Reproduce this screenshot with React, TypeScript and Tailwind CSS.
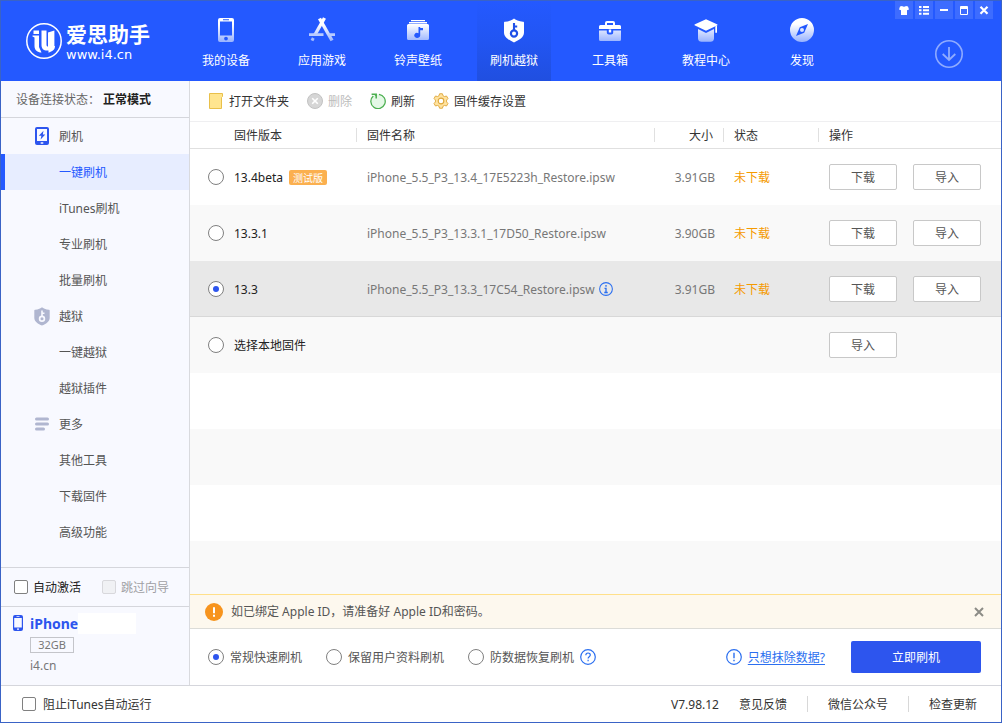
import React, { useState } from "react";

function Fade({ id }: { id: string }) {
  return (
    <defs>
      <linearGradient id={id} x1="0" y1="0" x2="0" y2="24" gradientUnits="userSpaceOnUse">
        <stop offset="0.3" stopColor="#ffffff" />
        <stop offset="1" stopColor="#9db6ff" />
      </linearGradient>
    </defs>
  );
}

function NavPhone() {
  return (
    <svg width="26" height="26" viewBox="0 0 26 26" aria-hidden="true">
      <Fade id="f1" />
      <path
        fill="url(#f1)"
        fillRule="evenodd"
        d="M7 1h12a2 2 0 0 1 2 2v20a2 2 0 0 1-2 2H7a2 2 0 0 1-2-2V3a2 2 0 0 1 2-2Zm0 3.500v14h12v-14ZM10 2.300v1h6v-1ZM13 19.700a1.900 1.900 0 1 0 0 3.800 1.900 1.900 0 0 0 0-3.800Z"
      />
    </svg>
  );
}

function NavApps() {
  return (
    <svg width="26" height="26" viewBox="0 0 26 26" fill="none" aria-hidden="true">
      <Fade id="f2" />
      <g stroke="url(#f2)" strokeWidth="3.400" strokeLinejoin="round">
        <path d="M15.500 1 5.800 18" />
        <path d="M10.500 1.500 23 23.500" />
        <path d="M0 17.600h14.500M19.500 17.600H26" stroke="#b9cbff" strokeWidth="2.600" />
        <path d="M4.300 21 3 23.600" stroke="#a5bcff" strokeWidth="3" />
      </g>
    </svg>
  );
}

function NavMusic() {
  return (
    <svg width="26" height="26" viewBox="0 0 26 26" aria-hidden="true">
      <Fade id="f3" />
      <path fill="#fff" d="M6 3h14v1.200H6ZM4 5h18v1.400H4Z" />
      <path
        fill="url(#f3)"
        fillRule="evenodd"
        d="M3.500 7h19A1.500 1.500 0 0 1 24 8.500v13a1.500 1.500 0 0 1-1.500 1.500h-19A1.500 1.500 0 0 1 2 21.500v-13A1.500 1.500 0 0 1 3.500 7Zm10 3v6.200a3 2.500 0 1 0 1.700 2.200v-5.200h2.800v-2.200h-2.800V10Z"
      />
    </svg>
  );
}

function ShieldKey({ size, fill, hole }: { size: number; fill: string; hole: string }) {
  return (
    <svg width={size} height={size} viewBox="0 0 26 26" aria-hidden="true">
      <path
        fill={fill}
        d="M13 1.500c1.300 1.500 5 3 9 3.300.700 0 1 .300 1 1V15.500c0 5-5 7.500-10 10C8 23 3 20.500 3 15.500V5.800c0-.700.300-1 1-1C8 4.500 11.700 3 13 1.500Z"
      />
      <circle cx="13" cy="16.500" r="3.100" fill="none" stroke={hole} strokeWidth="2.200" />
      <path d="M13 14V6M13 9.500h3.200" stroke={hole} strokeWidth="2.100" fill="none" />
    </svg>
  );
}

function NavToolbox() {
  return (
    <svg width="26" height="26" viewBox="0 0 26 26" aria-hidden="true">
      <Fade id="f5" />
      <path
        fill="#fff"
        fillRule="evenodd"
        d="M2 12V9.500A1.500 1.500 0 0 1 3.500 8H8V6a2 2 0 0 1 2-2h6a2 2 0 0 1 2 2v2h4.500A1.500 1.500 0 0 1 24 9.500V12ZM10 8h6V6h-6Z"
      />
      <path
        fill="url(#f5)"
        d="M2 13.500h7.800v2a2 2 0 0 0 2 2h2.400a2 2 0 0 0 2-2v-2H24v9a1.500 1.500 0 0 1-1.500 1.500h-19A1.500 1.500 0 0 1 2 22.500Z"
      />
      <path fill="#fff" d="M11.800 12.500h2.400v3h-2.400Z" />
    </svg>
  );
}

function NavSchool() {
  return (
    <svg width="26" height="26" viewBox="0 0 26 26" aria-hidden="true">
      <Fade id="f6" />
      <path
        fill="#fff"
        d="M13 2.200 24 7.300c.700.400.700.900 0 1.200L13 13.800 2 8.500c-.700-.300-.700-.800 0-1.200ZM22.300 9.500l1.700-.800v7h-1.700Z"
      />
      <path fill="url(#f6)" d="m5 12 8 4 8-4v9.500c0 2-1.500 3.300-3.500 3.300h-9C6.500 24.800 5 23.500 5 21.500Z" />
    </svg>
  );
}

function NavCompass() {
  return (
    <svg width="26" height="26" viewBox="0 0 26 26" aria-hidden="true">
      <Fade id="f7" />
      <path
        fill="url(#f7)"
        fillRule="evenodd"
        d="M13 1a12 12 0 1 1 0 24 12 12 0 0 1 0-24Zm6 5.900-8.200 3.400-3.800 8.800 8.200-3.400ZM13 11a2 2 0 1 1 0 4 2 2 0 0 1 0-4Z"
      />
    </svg>
  );
}

function LogoMark() {
  return (
    <svg width="36" height="36" viewBox="0 0 36 36" fill="none" aria-hidden="true">
      <circle cx="18" cy="18" r="17.200" stroke="#fff" strokeWidth="1.500" />
      <path fill="#fff" d="M7.500 7.500h5.500v3.500H7.500ZM6.500 12.500H13v11.500l2.500 5.500c-4 0-7-2.200-7-6.500v-8.500l-2-1Z" />
      <path
        fill="#fff"
        d="M15.500 7.500h5v14c0 1.500.500 2 1.500 2V9.500l6.400-2v15.500H29c0 2-.800 4-2.800 5l-3.700 1.800v-2.300c-4.500.600-7-1.500-7-5.500Z"
      />
    </svg>
  );
}

function InfoCircle({ kind, size }: { kind: "i" | "!" | "?"; size: number }) {
  return (
    <svg width={size} height={size} viewBox="0 0 16 16" fill="none" stroke="#2b6ff0" aria-hidden="true">
      <circle cx="8" cy="8" r="7.300" strokeWidth="1.200" />
      {kind === "i" && <path d="M8 3.500v1.800M6.300 7.200H8v4.600M6 12h4" strokeWidth="1.500" />}
      {kind === "!" && <path d="M8 3.700v5.600M8 10.700v1.600" strokeWidth="1.400" />}
      {kind === "?" && (
        <path d="M5.800 6.300c0-3 4.500-3 4.500-.3 0 1.700-2.200 1.700-2.200 3.500M8.100 10.800v1.500" strokeWidth="1.200" />
      )}
    </svg>
  );
}

const navItems = [
  { label: "我的设备", icon: <NavPhone /> },
  { label: "应用游戏", icon: <NavApps /> },
  { label: "铃声壁纸", icon: <NavMusic /> },
  { label: "刷机越狱", icon: <ShieldKey size={26} fill="#fff" hole="#2050e8" />, active: true },
  { label: "工具箱", icon: <NavToolbox /> },
  { label: "教程中心", icon: <NavSchool /> },
  { label: "发现", icon: <NavCompass /> },
];

const windowButtons = [
  {
    label: "换肤",
    icon: <path fill="#fff" d="M5 5.500 7 5c1 1 3 1 4 0l2 .500 1 3-2 .700V14H6V9.200L4 8.500Z" />,
  },
  {
    label: "菜单",
    icon: <path fill="#fff" d="M4 5h2.500v2H4ZM8 5h6v2H8ZM4 8.300h2.500v2H4ZM8 8.300h6v2H8ZM4 11.700h2.500v2H4ZM8 11.700h6v2H8Z" />,
  },
  { label: "最小化", icon: <path fill="#fff" d="M5 8h8v2H5Z" /> },
  {
    label: "最大化",
    icon: <path fill="#fff" fillRule="evenodd" d="M6 5h6a1 1 0 0 1 1 1v7a1 1 0 0 1-1 1H6a1 1 0 0 1-1-1V6a1 1 0 0 1 1-1Zm0 3v5h6V8Z" />,
  },
  { label: "关闭", icon: <path stroke="#fff" strokeWidth="2.200" d="m5.500 5.700 7 7m0-7-7 7" /> },
];

function Header() {
  return (
    <header className="flex h-20 bg-[#2459ff] text-white">
      <a href="#home" className="flex w-[188px] items-center gap-1 pl-[25px]">
        <LogoMark />
        <span className="flex flex-col pt-[3px]">
          <span className="whitespace-nowrap text-[21px] font-bold leading-6">爱思助手</span>
          <span className="font-['DejaVu_Sans',sans-serif] text-[13px] leading-[17px]">www.i4.cn</span>
        </span>
      </a>
      <nav className="flex gap-[22px]">
        {navItems.map((item) => (
          <a
            key={item.label}
            href="#nav"
            aria-current={item.active ? "page" : undefined}
            className={
              "flex w-[74px] flex-col items-center gap-2 pt-4 " +
              (item.active ? "bg-linear-to-b from-[#2459ff] via-[#2255f2] to-[#204fe0]" : "")
            }
          >
            {item.icon}
            <span className="whitespace-nowrap leading-5">{item.label}</span>
          </a>
        ))}
      </nav>
      <div className="ml-auto flex flex-col items-end gap-[21px] pr-2">
        <div className="flex gap-0.5">
          {windowButtons.map((b) => (
            <button key={b.label} aria-label={b.label} className="size-[18px] bg-[#3d6cff]">
              <svg width="18" height="18" viewBox="0 0 18 18" fill="none" aria-hidden="true">
                {b.icon}
              </svg>
            </button>
          ))}
        </div>
        <button aria-label="下载中心" className="mr-[30px]">
          <svg width="28" height="28" viewBox="0 0 28 28" fill="none" stroke="#8fabff" aria-hidden="true">
            <circle cx="14" cy="14" r="13.200" strokeWidth="1.600" />
            <path d="M14 7v13M7.700 14l6.300 6 6.300-6" strokeWidth="1.800" />
          </svg>
        </button>
      </div>
    </header>
  );
}

const menu: { label: string; icon?: React.ReactNode; active?: boolean }[] = [
  {
    label: "刷机",
    icon: (
      <svg width="16" height="18" viewBox="0 0 16 18" aria-hidden="true">
        <path
          fill="#2d55ee"
          fillRule="evenodd"
          d="M3 0h10a2 2 0 0 1 2 2v14a2 2 0 0 1-2 2H3a2 2 0 0 1-2-2V2a2 2 0 0 1 2-2Zm0 2v12h10V2Zm3.700 13.200v1.600h2.600v-1.600Z"
        />
        <path fill="#2d55ee" d="M9.500 3.800 4.800 8.700h2.600l-.8 3.800 4.700-5H8.800Z" />
      </svg>
    ),
  },
  { label: "一键刷机", active: true },
  { label: "iTunes刷机" },
  { label: "专业刷机" },
  { label: "批量刷机" },
  { label: "越狱", icon: <ShieldKey size={20} fill="#b0b6d0" hole="#f8f9ff" /> },
  { label: "一键越狱" },
  { label: "越狱插件" },
  {
    label: "更多",
    icon: (
      <svg width="16" height="14" viewBox="0 0 16 14" aria-hidden="true">
        <g stroke="#b0b6d0" strokeWidth="3" strokeLinecap="round">
          <path d="M2.500 2h11M2.500 7h11M2.500 12h7" />
        </g>
      </svg>
    ),
  },
  { label: "其他工具" },
  { label: "下载固件" },
  { label: "高级功能" },
];

const checkboxClass =
  "size-[14px] shrink-0 appearance-none rounded-xs border border-[#808080] bg-white checked:bg-[#2d55ee] disabled:border-[#d8d8dc] disabled:bg-[#f0f1f4]";

const radioClass =
  "grid size-4 shrink-0 appearance-none place-content-center rounded-full border border-[#808080] bg-white before:size-1.5 before:rounded-full checked:before:bg-[#2d55ee]";

function Sidebar() {
  return (
    <aside className="flex w-[189px] shrink-0 flex-col border-r border-[#d9dade] bg-[#f8f9ff] text-[#555]">
      <div className="flex h-[37px] items-center border-b border-[#d5d6dc] pl-[15px] text-[#666]">
        设备连接状态：<strong className="ml-[3px] text-[#222]">正常模式</strong>
      </div>
      <nav className="flex-1">
        {menu.map((m) => (
          <a
            key={m.label}
            href="#menu"
            aria-current={m.active ? "true" : undefined}
            className={
              "flex h-9 items-center border-l-4 pl-[25px] " +
              (m.active ? "border-[#2459ff] bg-[#e7edff] text-[#2459ff]" : "border-transparent")
            }
          >
            <span className="flex w-6 justify-center">{m.icon}</span>
            <span className="ml-[5px]">{m.label}</span>
          </a>
        ))}
      </nav>
      <div className="flex h-10 items-center gap-[21px] border-y border-[#d5d6dc] pl-[13px]">
        <label className="flex items-center gap-[5px] text-[#222]">
          <input type="checkbox" className={checkboxClass} />
          自动激活
        </label>
        <label className="flex items-center gap-[5px] text-[#a0a0a4]">
          <input type="checkbox" disabled className={checkboxClass} />
          跳过向导
        </label>
      </div>
      <div className="flex h-[78px] gap-[7px] pl-3 pt-1.5">
        <svg width="10" height="16" viewBox="0 0 10 16" className="mt-0.5" aria-hidden="true">
          <path
            fill="#2d55ee"
            fillRule="evenodd"
            d="M2 0h6a2 2 0 0 1 2 2v12a2 2 0 0 1-2 2H2a2 2 0 0 1-2-2V2a2 2 0 0 1 2-2ZM1.200 3v9.500h7.600V3ZM3.500 1.200v.8h3v-.8ZM4 13.500v1.300h2v-1.300Z"
          />
        </svg>
        <div className="flex flex-col items-start text-[#777]">
          <div className="flex items-center text-[14px] font-bold leading-[21px] text-[#2d55ee]">
            iPhone
            <span className="h-[21px] w-[58px] bg-white" />
          </div>
          <span className="mt-[3px] h-4 w-11 border border-[#c4c5ca] text-center text-[11px] leading-[14px]">
            32GB
          </span>
          <span className="mt-[3px]">i4.cn</span>
        </div>
      </div>
    </aside>
  );
}

function Toolbar() {
  return (
    <div className="flex h-[41px] items-center gap-[18px] border-b border-[#efeff1] pl-[18px] text-[#333]">
      <button className="flex items-center gap-[5px]">
        <svg width="16" height="16" viewBox="0 0 16 16" aria-hidden="true">
          <path d="M1.500.5h13v3l-1 1v11h-12Z" fill="#ffe58f" stroke="#e9c04a" />
        </svg>
        打开文件夹
      </button>
      <button disabled className="flex items-center gap-[5px] text-[#bcbcbc]">
        <svg width="16" height="16" viewBox="0 0 16 16" aria-hidden="true">
          <circle cx="8" cy="8" r="7.500" fill="#d6d6d6" stroke="#c2c2c2" />
          <path d="m5.200 5.200 5.600 5.600m0-5.600-5.600 5.600" stroke="#fff" strokeWidth="1.600" />
        </svg>
        删除
      </button>
      <button className="flex items-center gap-[5px]">
        <svg width="16" height="16" viewBox="0 0 16 16" fill="none" aria-hidden="true">
          <circle cx="8" cy="8.300" r="7" fill="#e4f8e6" />
          <path d="M9 1.300A7.200 7.200 0 1 1 3.300 3" stroke="#4caf50" strokeWidth="1.300" />
          <path d="M1.600 1.200h4.600v4.400" stroke="#4caf50" strokeWidth="1.500" />
          <path d="m3.700 1.200 2.500 2.400V1.200Z" fill="#4caf50" />
        </svg>
        刷新
      </button>
      <button className="flex items-center gap-[5px]">
        <svg width="16" height="16" viewBox="0 0 17 17" aria-hidden="true">
          <path
            d="M7 .8h3l.6 2.100 1.600.9 2.200-.6 1.500 2.700-1.500 1.600v2l1.500 1.600-1.500 2.700-2.200-.6-1.600.9-.6 2.100H7l-.6-2.100-1.600-.9-2.200.6-1.500-2.700 1.500-1.600v-2L1.100 5.900l1.500-2.700 2.200.6 1.600-.9Z"
            fill="#ffe3a0"
            stroke="#dfa83c"
            strokeLinejoin="round"
          />
          <circle cx="8.500" cy="8.500" r="3" fill="#fff" stroke="#dfa83c" strokeWidth="1.200" />
        </svg>
        固件缓存设置
      </button>
    </div>
  );
}

const rows = [
  { version: "13.4beta", beta: true, file: "iPhone_5.5_P3_13.4_17E5223h_Restore.ipsw", size: "3.91GB" },
  { version: "13.3.1", file: "iPhone_5.5_P3_13.3.1_17D50_Restore.ipsw", size: "3.90GB" },
  { version: "13.3", info: true, file: "iPhone_5.5_P3_13.3_17C54_Restore.ipsw", size: "3.91GB" },
  { version: "选择本地固件" },
];

function RowButton({ children }: { children: React.ReactNode }) {
  return (
    <button className="h-[26px] w-[68px] rounded-xs border border-[#c8c8c8] bg-white text-[#555]">{children}</button>
  );
}

function FirmwareTable() {
  const [selected, setSelected] = useState("13.3");
  const th = "border-b border-[#e0e0e0] p-0 font-normal";
  const divider = "h-[14px] border-r border-[#e0e0e0] leading-[15px]";
  return (
    <table className="w-full table-fixed border-separate border-spacing-0 text-left">
      <colgroup>
        <col className="w-[167px]" />
        <col />
        <col className="w-[69px]" />
        <col className="w-[95px]" />
        <col className="w-[182px]" />
      </colgroup>
      <thead>
        <tr className="h-[27px] text-[#333]">
          <th className={th}>
            <div className={"pl-11 " + divider}>固件版本</div>
          </th>
          <th className={th}>
            <div className={"pl-2.5 " + divider}>固件名称</div>
          </th>
          <th className={th}>
            <div className={"pr-2.5 text-right " + divider}>大小</div>
          </th>
          <th className={th}>
            <div className={"pl-2.5 " + divider}>状态</div>
          </th>
          <th className={th}>
            <div className="h-[14px] pl-2.5 leading-[15px]">操作</div>
          </th>
        </tr>
      </thead>
      <tbody>
        {rows.map((r, i) => (
          <tr
            key={r.version}
            className={
              "h-14 " +
              (r.version === selected
                ? "bg-[#e8e8e8] shadow-[inset_0_-1px_0_#d8d8d8]"
                : i % 2 === 1
                  ? "bg-[#f9f9f9]"
                  : "bg-white")
            }
          >
            <td className="p-0 pl-[18px]">
              <label className="flex items-center gap-2.5 whitespace-nowrap text-[#222]">
                <input
                  type="radio"
                  name="firmware"
                  checked={r.version === selected}
                  onChange={() => setSelected(r.version)}
                  className={radioClass}
                />
                <span>{r.version}</span>
                {r.beta && (
                  <span className="-ml-1 h-[15px] rounded-xs bg-[#fbb04f] px-1 text-[10px] leading-4 text-white">
                    测试版
                  </span>
                )}
              </label>
            </td>
            <td className="p-0 pl-2.5 text-[#777]">
              <span className="flex items-center gap-1 whitespace-nowrap">
                {r.file}
                {r.info && <InfoCircle kind="i" size={14} />}
              </span>
            </td>
            <td className="p-0 pr-[9px] text-right text-[#777]">{r.size}</td>
            <td className="p-0 pl-2.5 text-[#f59a00]">{r.size && "未下载"}</td>
            <td className="p-0 pl-2.5">
              <div className="flex gap-4">
                {r.size && <RowButton>下载</RowButton>}
                <RowButton>导入</RowButton>
              </div>
            </td>
          </tr>
        ))}
      </tbody>
    </table>
  );
}

const modes = ["常规快速刷机", "保留用户资料刷机", "防数据恢复刷机"];

function Actions() {
  const [mode, setMode] = useState(modes[0]);
  return (
    <div className="flex h-14 items-center pl-[18px] pr-5 text-[#555]">
      <div className="flex gap-6">
        {modes.map((m) => (
          <label key={m} className="flex items-center gap-1.5 whitespace-nowrap">
            <input
              type="radio"
              name="mode"
              checked={m === mode}
              onChange={() => setMode(m)}
              className={radioClass}
            />
            {m}
          </label>
        ))}
      </div>
      <button aria-label="帮助" className="ml-1.5">
        <InfoCircle kind="?" size={16} />
      </button>
      <div className="ml-auto flex items-center gap-1.5">
        <InfoCircle kind="!" size={16} />
        <a href="#erase" className="whitespace-nowrap text-[#2b6ff0] underline underline-offset-2">
          只想抹除数据?
        </a>
      </div>
      <button className="ml-[26px] h-8 w-[130px] rounded-xs bg-[#2d55ee] text-white">立即刷机</button>
    </div>
  );
}

export default function App() {
  return (
    <div className="flex min-h-screen flex-col border border-[#3a63c6] bg-white font-['Noto_Sans','Noto_Sans_CJK_SC',sans-serif] text-[12px] leading-[19px]">
      <Header />
      <div className="flex flex-1">
        <Sidebar />
        <main className="flex min-w-0 flex-1 flex-col">
          <Toolbar />
          <FirmwareTable />
          <div className="flex-1 bg-[repeating-linear-gradient(to_bottom,#ffffff_0px,#ffffff_56px,#f9f9f9_56px,#f9f9f9_112px)]" />
          <div
            role="alert"
            className="flex h-[35px] items-center border-y border-t-[#ffe08a] border-b-[#dcdcd8] bg-[#fdf8ee] pl-[15px] pr-[18px] text-[#555]"
          >
            <svg width="18" height="18" viewBox="0 0 18 18" aria-hidden="true">
              <circle cx="9" cy="9" r="9" fill="#f7941d" />
              <path d="M9 4.200v6M9 11.800v2" stroke="#fff" strokeWidth="2" />
            </svg>
            <span className="ml-2 leading-[21px]">如已绑定 Apple ID，请准备好 Apple ID和密码。</span>
            <button aria-label="关闭提示" className="ml-auto -mr-1 p-1">
              <svg width="8" height="8" viewBox="0 0 8 8" aria-hidden="true" overflow="visible">
                <path d="m0 0 8 8M8 0 0 8" stroke="#8c8c86" strokeWidth="2" />
              </svg>
            </button>
          </div>
          <Actions />
        </main>
      </div>
      <footer className="flex h-[37px] items-center border-t border-[#d5d6dc] pl-[21px] pr-6 text-[#333]">
        <label className="flex items-center gap-[7px]">
          <input type="checkbox" className={checkboxClass} />
          阻止iTunes自动运行
        </label>
        <span className="ml-auto">V7.98.12</span>
        <a href="#feedback" className="ml-5">意见反馈</a>
        <span className="ml-5 h-4 w-px bg-[#d8d8d8]" />
        <a href="#wechat" className="ml-5">微信公众号</a>
        <span className="ml-5 h-4 w-px bg-[#d8d8d8]" />
        <a href="#update" className="ml-5">检查更新</a>
      </footer>
    </div>
  );
}
